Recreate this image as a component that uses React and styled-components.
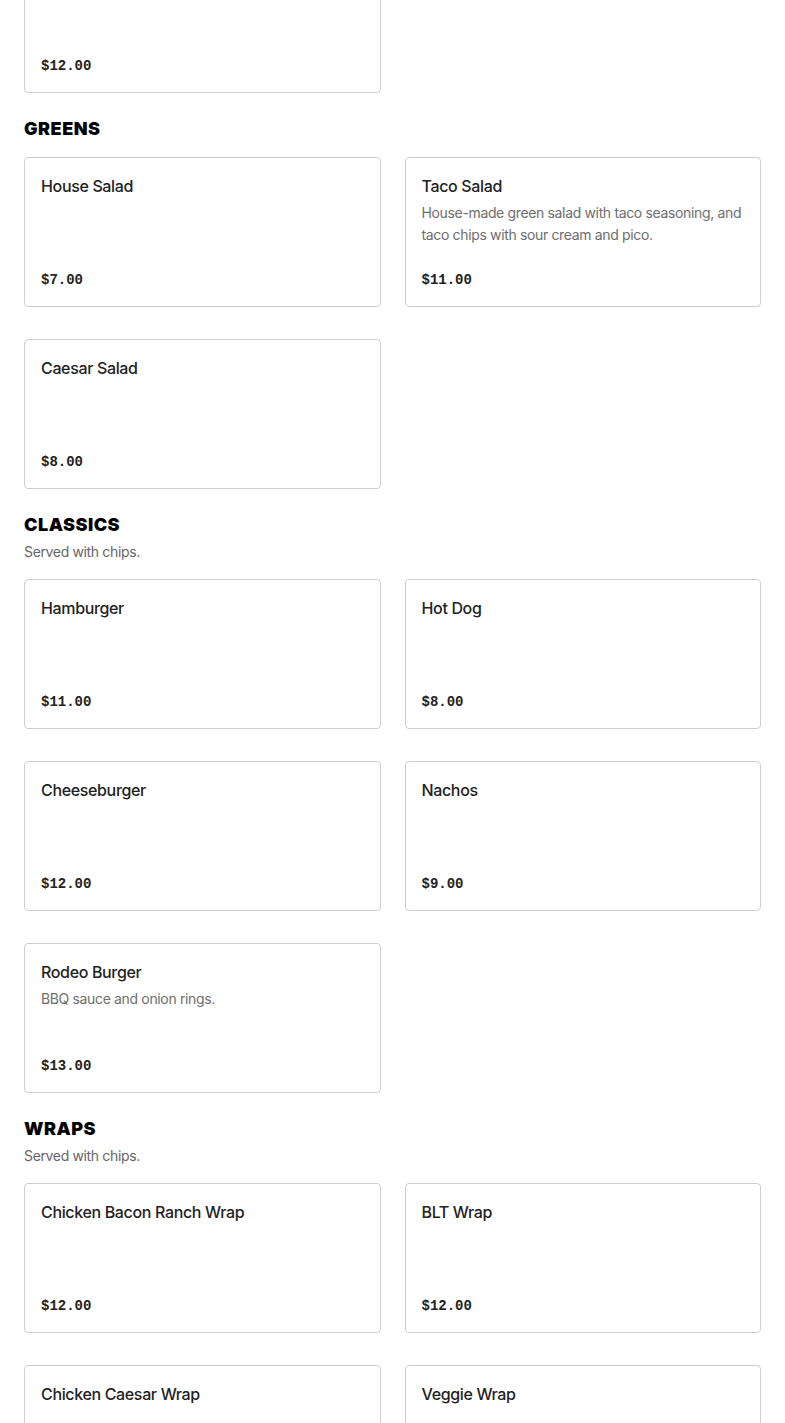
import React from "react";
import styled, { createGlobalStyle } from "styled-components";

const GlobalStyle = createGlobalStyle`
  html, body { margin: 0; padding: 0; background: #fff; }
  body { font-family: Inter, "Noto Sans", sans-serif; color: #222; }
  * { box-sizing: border-box; }
`;

const Page = styled.main`
  padding: 0 24px 40px;
  margin-top: -57px;
  display: flex;
  flex-direction: column;
  gap: 24px;
`;

const Section = styled.section`
  display: flex;
  flex-direction: column;
`;

const Heading = styled.h2`
  margin: 0;
  font-family: Inter, "Noto Sans", sans-serif;
  font-weight: 900;
  font-size: 18px;
  line-height: 24px;
  letter-spacing: 0.5px;
  color: #000;
  text-transform: uppercase;
`;

const Note = styled.p`
  margin: 4px 0 0;
  font-size: 14px;
  line-height: 22px;
  letter-spacing: -0.35px;
  color: #666;
`;

const Grid = styled.div`
  display: grid;
  grid-template-columns: 1fr 1fr;
  column-gap: 24px;
  row-gap: 32px;
  margin-top: ${(p) => (p.$flush ? "0" : "16px")};
`;

const Card = styled.article`
  height: 150px;
  border: 1px solid #cfcfcf;
  border-radius: 4px;
  padding: 16px;
  display: flex;
  flex-direction: column;
  background: #fff;
`;

const Title = styled.h3`
  margin: 0;
  font-size: 16px;
  line-height: 24px;
  font-weight: 500;
  letter-spacing: -0.35px;
  color: #222;
`;

const Desc = styled.p`
  margin: 4px 0 0;
  font-size: 14px;
  line-height: 22px;
  letter-spacing: -0.35px;
  color: #6e6e6e;
`;

const Price = styled.div`
  margin-top: auto;
  font-family: "Liberation Mono", "DejaVu Sans Mono", monospace;
  font-size: 14px;
  line-height: 20px;
  font-weight: 700;
  color: #222;
`;

const sections = [
  {
    items: [{ name: "Chicken Quesadilla", price: "$12.00" }],
  },
  {
    title: "Greens",
    items: [
      { name: "House Salad", price: "$7.00" },
      {
        name: "Taco Salad",
        desc: "House-made green salad with taco seasoning, and taco chips with sour cream and pico.",
        price: "$11.00",
      },
      { name: "Caesar Salad", price: "$8.00" },
    ],
  },
  {
    title: "Classics",
    note: "Served with chips.",
    items: [
      { name: "Hamburger", price: "$11.00" },
      { name: "Hot Dog", price: "$8.00" },
      { name: "Cheeseburger", price: "$12.00" },
      { name: "Nachos", price: "$9.00" },
      { name: "Rodeo Burger", desc: "BBQ sauce and onion rings.", price: "$13.00" },
    ],
  },
  {
    title: "Wraps",
    note: "Served with chips.",
    items: [
      { name: "Chicken Bacon Ranch Wrap", price: "$12.00" },
      { name: "BLT Wrap", price: "$12.00" },
      { name: "Chicken Caesar Wrap", price: "$12.00" },
      { name: "Veggie Wrap", price: "$11.00" },
    ],
  },
];

export default function App() {
  return (
    <>
      <GlobalStyle />
      <Page>
        {sections.map((s, i) => (
          <Section key={i}>
            {s.title && <Heading>{s.title}</Heading>}
            {s.note && <Note>{s.note}</Note>}
            <Grid $flush={!s.title}>
              {s.items.map((it) => (
                <Card key={it.name}>
                  <Title>{it.name}</Title>
                  {it.desc && <Desc>{it.desc}</Desc>}
                  <Price>{it.price}</Price>
                </Card>
              ))}
            </Grid>
          </Section>
        ))}
      </Page>
    </>
  );
}
